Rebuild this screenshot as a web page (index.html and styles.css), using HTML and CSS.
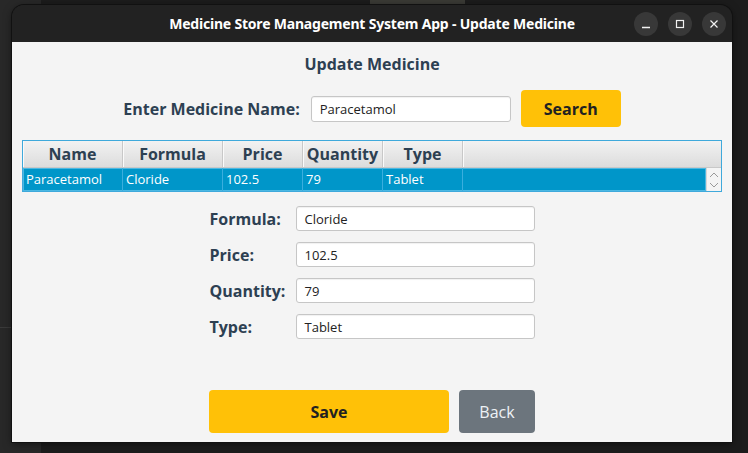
FILE: index.html
```html
<!DOCTYPE html>
<html>
<head>
<meta charset="utf-8">
<link rel="stylesheet" href="styles.css">
</head>
<body>
<div class="window">
  <div class="titlebar">
    <span></span>
    <div class="title">Medicine Store Management System App - Update Medicine</div>
    <div class="controls">
      <span class="ctl"><svg width="10" height="10" viewBox="0 0 10 10"><path d="M1 8.5h8" stroke="#f2f2f2" stroke-width="1.3"/></svg></span>
      <span class="ctl"><svg width="10" height="10" viewBox="0 0 10 10"><rect x="1.5" y="1.5" width="7" height="7" fill="none" stroke="#f2f2f2" stroke-width="1.2"/></svg></span>
      <span class="ctl"><svg width="10" height="10" viewBox="0 0 10 10"><path d="M1.5 1.5l7 7M8.5 1.5l-7 7" stroke="#f2f2f2" stroke-width="1.2"/></svg></span>
    </div>
  </div>
  <div class="content">
    <h1 class="heading">Update Medicine</h1>
    <div class="search-row">
      <label class="search-label">Enter Medicine Name:</label>
      <div class="field search-field">Paracetamol</div>
      <button class="btn btn-search">Search</button>
    </div>
    <div class="table">
      <div class="thead">
        <div class="th c1">Name</div>
        <div class="th c2">Formula</div>
        <div class="th c3">Price</div>
        <div class="th c4">Quantity</div>
        <div class="th c5">Type</div>
        <div class="th filler"></div>
      </div>
      <div class="tbody">
        <div class="row selected">
          <div class="td c1">Paracetamol</div>
          <div class="td c2">Cloride</div>
          <div class="td c3">102.5</div>
          <div class="td c4">79</div>
          <div class="td c5">Tablet</div>
          <div class="td filler"></div>
        </div>
        <div class="vscroll">
          <svg width="10" height="6" viewBox="0 0 10 6"><path d="M1 5l4-4 4 4" fill="none" stroke="#9a9a9a" stroke-width="1"/></svg>
          <svg width="10" height="6" viewBox="0 0 10 6"><path d="M1 1l4 4 4-4" fill="none" stroke="#9a9a9a" stroke-width="1"/></svg>
        </div>
      </div>
    </div>
    <div class="form">
      <label class="flabel">Formula:</label><div class="field">Cloride</div>
      <label class="flabel">Price:</label><div class="field">102.5</div>
      <label class="flabel">Quantity:</label><div class="field">79</div>
      <label class="flabel">Type:</label><div class="field">Tablet</div>
    </div>
    <div class="actions">
      <button class="btn btn-save">Save</button>
      <button class="btn btn-back">Back</button>
    </div>
  </div>
</div>
</body>
</html>
```

FILE: styles.css
```css
html, body {
  margin: 0;
  padding: 0;
}
body {
  width: 748px;
  height: 453px;
  overflow: hidden;
  background:
    linear-gradient(#3a3a35, #3a3a35) 370px 0 / 95px 5px no-repeat,
    linear-gradient(#262626, #262626) 394px 0 / 46px 5px no-repeat,
    linear-gradient(#2e3040, #2e3040) 290px 4px / 47px 1px no-repeat,
    linear-gradient(#3a3a3a, #3a3a3a) 0 327px / 12px 1px no-repeat,
    linear-gradient(to right, #282828 0 41px, #1c1c1c 41px);
  font-family: "Open Sans", "Noto Sans", sans-serif;
  padding: 5px 0 0 12px;
  box-sizing: border-box;
}
.window {
  width: 720px;
  border-radius: 12px 12px 0 0;
  overflow: hidden;
  box-shadow: 0 0 0 1px #111, 0 2px 8px rgba(0,0,0,0.5);
}
.titlebar {
  height: 37px;
  background: #222222;
  display: grid;
  grid-template-columns: 1fr auto 1fr;
  align-items: center;
  color: #ffffff;
}
.title {
  font-family: "Noto Sans", "Open Sans", sans-serif;
  font-weight: 700;
  font-size: 14px;
  letter-spacing: -0.2px;
}
.controls {
  justify-self: end;
  display: flex;
  gap: 10px;
  padding-right: 6px;
}
.ctl {
  width: 24px;
  height: 24px;
  border-radius: 50%;
  background: #383838;
  display: flex;
  align-items: center;
  justify-content: center;
}
.content {
  height: 400px;
  background: #f4f4f4;
  display: flex;
  flex-direction: column;
  align-items: center;
  color: #2d4052;
  box-sizing: border-box;
  padding: 0 10px 9px;
}
.heading {
  margin: 11px 0 0;
  font-size: 16px;
  font-weight: 700;
  line-height: 22px;
}
.search-row {
  margin-top: 15px;
  display: flex;
  align-items: center;
  gap: 10px;
}
.search-label {
  font-size: 16px;
  font-weight: 700;
}
.field {
  box-sizing: border-box;
  height: 25px;
  background: #fff;
  border: 1px solid #c6c6c6;
  border-radius: 3px;
  box-shadow: inset 0 1px 1px rgba(0,0,0,0.06);
  font-size: 13px;
  color: #222;
  display: flex;
  align-items: center;
  padding-left: 8px;
}
.search-field {
  width: 200px;
  height: 26px;
  margin-left: 1px;
}
.btn {
  border: none;
  border-radius: 4px;
  font-family: "Open Sans", "Noto Sans", sans-serif;
  font-size: 16px;
  padding: 0;
  cursor: pointer;
}
.btn-search {
  width: 100px;
  height: 37px;
  background: #ffc107;
  color: #212121;
  font-weight: 700;
}
.table {
  margin-top: 13px;
  align-self: stretch;
  border: 1px solid #3fa9db;
  background: #fff;
}
.thead {
  display: flex;
  height: 26px;
  background: linear-gradient(#f2f2f2, #dcdcdc);
  border-bottom: 1px solid #c8c8c8;
}
.th {
  box-sizing: border-box;
  border-right: 1px solid #c8c8c8;
  box-shadow: inset 1px 0 0 #fafafa;
  font-size: 16px;
  font-weight: 700;
  text-align: center;
  line-height: 26px;
}
.c1 { width: 100px; }
.c2 { width: 100px; }
.c3 { width: 80px; }
.c4 { width: 80px; }
.c5 { width: 80px; }
.th.filler { flex: 1; border-right: none; }
.tbody {
  display: flex;
  height: 23px;
}
.row {
  flex: 1;
  display: flex;
}
.row.selected {
  background: #0096c9;
  color: #fff;
  box-shadow: inset 0 0 0 1px #4cb8e2;
}
.td {
  box-sizing: border-box;
  border-right: 1px solid #3aaede;
  font-size: 13px;
  line-height: 23px;
  padding-left: 3px;
  white-space: nowrap;
}
.td.filler { flex: 1; border-right: none; }
.vscroll {
  width: 15px;
  background: #f4f4f4;
  border-left: 1px solid #d6d6d6;
  display: flex;
  flex-direction: column;
  align-items: center;
  justify-content: space-between;
  padding: 4px 0 3px;
  box-sizing: border-box;
}
.form {
  margin-top: 14px;
  display: grid;
  grid-template-columns: 77px 239px;
  column-gap: 9px;
  row-gap: 11px;
  align-items: center;
}
.flabel {
  font-size: 16px;
  font-weight: 700;
}
.actions {
  margin-top: auto;
  display: flex;
  gap: 10px;
}
.btn-save {
  width: 240px;
  height: 43px;
  background: #ffc107;
  color: #212121;
  font-weight: 700;
}
.btn-back {
  width: 76px;
  height: 43px;
  background: #6c757d;
  color: #eef2f6;
}
```
